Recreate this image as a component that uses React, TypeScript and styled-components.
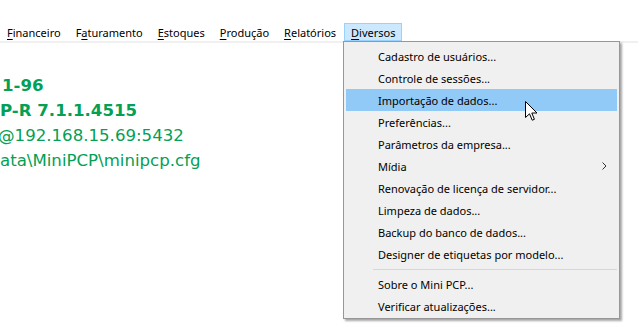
import React from "react";
import styled, { createGlobalStyle } from "styled-components";

const Global = createGlobalStyle`
  html, body { margin: 0; padding: 0; background: #ffffff; }
  body { width: 638px; height: 331px; overflow: hidden; position: relative; }
`;

const Page = styled.div`
  position: relative;
  width: 638px;
  height: 331px;
  box-sizing: border-box;
  padding-top: 23px;
  background: #fff;
  font-family: "Noto Sans", "Segoe UI", sans-serif;
`;

const MenuBar = styled.div`
  display: flex;
  align-items: stretch;
  height: 18px;
  border-bottom: 2px solid #f0f0f0;
`;

const MenuItem = styled.div<{ $active?: boolean }>`
  display: flex;
  align-items: center;
  padding: 0 6px;
  margin-right: 1px;
  font-size: 11px;
  color: #000;
  box-sizing: border-box;
  border: 1px solid ${(p) => (p.$active ? "#99d1ff" : "transparent")};
  background: ${(p) => (p.$active ? "#cce8ff" : "transparent")};
  u { text-decoration: underline; text-underline-offset: 2px; }
`;

const Content = styled.div`
  padding-top: 30px;
  display: flex;
  flex-direction: column;
  font-family: "DejaVu Sans", Verdana, sans-serif;
  color: #03a055;
  font-size: 16.6px;
`;

const Line = styled.div<{ $bold?: boolean; $indent?: number }>`
  height: 25px;
  line-height: 25px;
  white-space: nowrap;
  font-weight: ${(p) => (p.$bold ? 700 : 400)};
  margin-left: ${(p) => p.$indent ?? 0}px;
`;

const Dropdown = styled.div`
  position: absolute;
  left: 343px;
  top: 41px;
  width: 277px;
  box-sizing: border-box;
  background: #f0f0f0;
  border: 1px solid #979797;
  box-shadow: 2px 2px 2px rgba(0, 0, 0, 0.35);
  padding: 3px 2px 1px 2px;
  display: flex;
  flex-direction: column;
`;

const DropItem = styled.div<{ $hover?: boolean }>`
  position: relative;
  height: 22px;
  display: flex;
  align-items: center;
  padding-left: 32px;
  font-size: 11px;
  color: #000;
  background: ${(p) => (p.$hover ? "#91c9f7" : "transparent")};
  white-space: nowrap;
`;

const Chevron = styled.svg`
  position: absolute;
  right: 10px;
  top: 7px;
`;

const Separator = styled.div`
  height: 8px;
  display: flex;
  align-items: center;
  padding-left: 27px;
  &::after {
    content: "";
    flex: 1;
    height: 1px;
    background: #d7d7d7;
  }
`;

const Cursor = styled.svg`
  position: absolute;
  left: 525px;
  top: 101px;
`;

const menus: { label: string; u: number }[] = [
  { label: "Financeiro", u: 0 },
  { label: "Faturamento", u: 1 },
  { label: "Estoques", u: 0 },
  { label: "Produção", u: 0 },
  { label: "Relatórios", u: 0 },
  { label: "Diversos", u: 0 },
];

const items1 = [
  "Cadastro de usuários...",
  "Controle de sessões...",
  "Importação de dados...",
  "Preferências...",
  "Parâmetros da empresa...",
  "Mídia",
  "Renovação de licença de servidor...",
  "Limpeza de dados...",
  "Backup do banco de dados...",
  "Designer de etiquetas por modelo...",
];
const items2 = ["Sobre o Mini PCP...", "Verificar atualizações..."];

export default function App() {
  return (
    <Page>
      <Global />
      <MenuBar>
        {menus.map((m) => (
          <MenuItem key={m.label} $active={m.label === "Diversos"}>
            {m.label.slice(0, m.u)}
            <u>{m.label[m.u]}</u>
            {m.label.slice(m.u + 1)}
          </MenuItem>
        ))}
      </MenuBar>
      <Content>
        <Line $bold $indent={2}>1-96</Line>
        <Line $bold>P-R 7.1.1.4515</Line>
        <Line $indent={-2}>@192.168.15.69:5432</Line>
        <Line>ata\MiniPCP\minipcp.cfg</Line>
      </Content>
      <Dropdown>
        {items1.map((t) => (
          <DropItem key={t} $hover={t.startsWith("Importa")}>
            {t}
            {t === "Mídia" && (
              <Chevron width="5" height="8" viewBox="0 0 5 8">
                <path d="M0.5 0.5 L4 4 L0.5 7.5" fill="none" stroke="#333" strokeWidth="1" />
              </Chevron>
            )}
          </DropItem>
        ))}
        <Separator />
        {items2.map((t) => (
          <DropItem key={t}>{t}</DropItem>
        ))}
      </Dropdown>
      <Cursor width="13" height="21" viewBox="0 0 13 21">
        <path
          d="M0.5 0.5 L0.5 16.5 L4.5 12.8 L7.2 19.2 L9.4 18.3 L6.8 12 L12 12 Z"
          fill="#fff"
          stroke="#000"
          strokeWidth="1"
          strokeLinejoin="miter"
        />
      </Cursor>
    </Page>
  );
}
